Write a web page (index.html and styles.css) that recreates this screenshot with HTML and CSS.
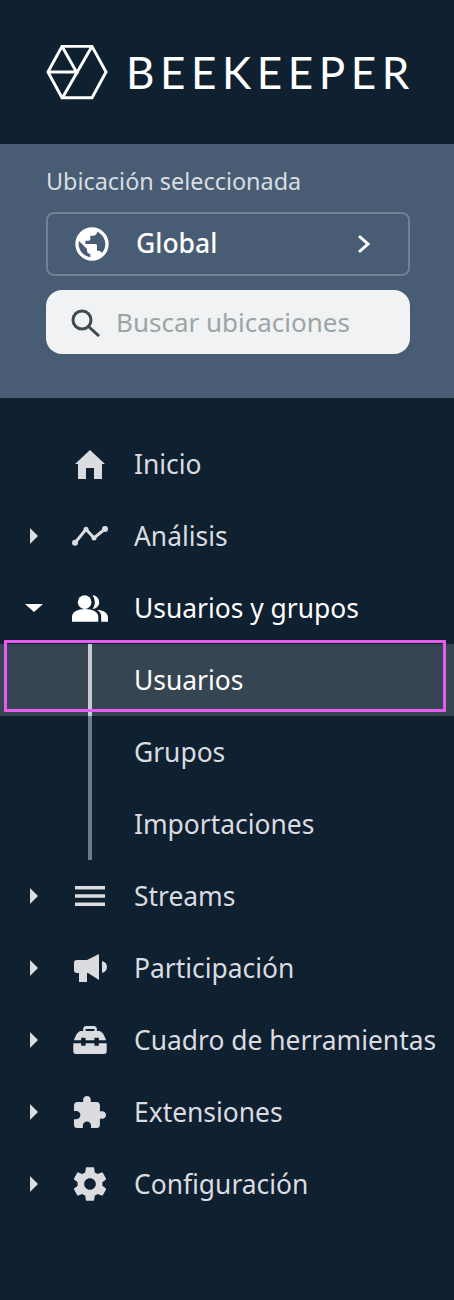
FILE: index.html
```html
<!DOCTYPE html>
<html lang="en">
<head>
    <meta charset="UTF-8">
    <meta name="viewport" content="width=device-width, initial-scale=1.0">
    <title>Beekeeper</title>
    <link rel="stylesheet" href="styles.css">
</head>
<body>
    <div class="sidebar">

        <!-- Logo -->
        <div class="logo">
            <svg class="logo-mark" viewBox="0 0 64 56" width="62" height="56" fill="none" stroke="#fff" stroke-width="3">
                <path d="M16.500 1.500H47.500L62 28L47.500 54.500H16.500L2 28Z"/>
                <path d="M16.500 1.500L31.500 28H2"/>
                <path d="M47.500 1.500L17 54.500"/>
            </svg>
            <span class="logo-text">BEEKEEPER</span>
        </div>

        <!-- Location -->
        <div class="location">
            <div class="location-label">Ubicación seleccionada</div>
            <div class="location-select">
                <svg class="globe" viewBox="0 0 24 24" width="40" height="40">
                    <path fill="#fff" d="M12 2a10 10 0 1 0 0 20 10 10 0 0 0 0-20zM4 12c0-.6.1-1.200.2-1.800L9 15v1c0 1.100.9 2 2 2v1.900C7.100 19.400 4 16 4 12zm13.900 5.400c-.3-.8-1-1.400-1.900-1.400h-1v-3c0-.6-.4-1-1-1H8v-2h2c.6 0 1-.4 1-1V7h2c1.100 0 2-.9 2-2v-.4c2.900 1.200 5 4 5 7.400 0 2.100-.8 4-2.100 5.400z"/>
                </svg>
                <span class="location-name">Global</span>
                <svg class="chevron" viewBox="0 0 14 20" width="14" height="20" fill="none" stroke="#fff" stroke-width="3">
                    <path d="M2 2L11 10L2 18"/>
                </svg>
            </div>
            <div class="location-search">
                <svg viewBox="0 0 30 30" width="30" height="30" fill="none" stroke="#3b4b4f" stroke-width="3">
                    <circle cx="11" cy="13" r="9"/>
                    <path d="M17.500 19.500L28 29"/>
                </svg>
                <span class="search-placeholder">Buscar ubicaciones</span>
            </div>
        </div>

        <!-- Menu -->
        <nav class="menu">
            <div class="row">
                <span class="caret-slot"></span>
                <span class="icon">
                    <svg viewBox="0 0 30 29" width="30" height="29"><path d="M15 0L30 14H27V29H19V18H11V29H3V14H0Z"/></svg>
                </span>
                <span class="label">Inicio</span>
            </div>
            <div class="row">
                <span class="caret-slot"><span class="caret closed"></span></span>
                <span class="icon">
                    <svg viewBox="0 0 36 20" width="36" height="20"><path d="M3 16.700L14 3.300L22 12L33 3" fill="none" stroke="#dadce0" stroke-width="3"/><circle cx="3" cy="16.700" r="3"/><circle cx="14" cy="3.300" r="2.500"/><circle cx="22" cy="12" r="2.500"/><circle cx="33" cy="3" r="3"/></svg>
                </span>
                <span class="label">Análisis</span>
            </div>
            <div class="row open">
                <span class="caret-slot"><span class="caret opened"></span></span>
                <span class="icon white">
                    <svg viewBox="0 0 37 27" width="37" height="27"><circle cx="13" cy="7" r="7"/><path d="M0 27V22C0 17 6 14 13.500 14S27 17 27 22V27Z"/><path d="M21 0A7 7 0 0 1 21 14A11 11 0 0 0 21 0Z"/><path d="M28 15C33 16 37 18 37 23V27H30V22C30 19 29 17 26 15Z"/></svg>
                </span>
                <span class="label">Usuarios y grupos</span>
            </div>

            <div class="submenu">
                <div class="row sub active"><span class="label">Usuarios</span></div>
                <div class="row sub"><span class="label">Grupos</span></div>
                <div class="row sub"><span class="label">Importaciones</span></div>
            </div>

            <div class="row">
                <span class="caret-slot"><span class="caret closed"></span></span>
                <span class="icon">
                    <svg viewBox="0 0 30 20" width="30" height="20"><path d="M0 0H30V3.500H0ZM0 8.200H30V11.700H0ZM0 16.500H30V20H0Z"/></svg>
                </span>
                <span class="label">Streams</span>
            </div>
            <div class="row">
                <span class="caret-slot"><span class="caret closed"></span></span>
                <span class="icon">
                    <svg viewBox="0 0 33 28" width="33" height="28"><path d="M3 6H13L25 0V26L14 19H13V28H5V19H3C1 19 0 18 0 16.500V8.500C0 7 1 6 3 6Z"/><path d="M28 7C31.500 8 33 10 33 13S31.500 18 28 19Z"/></svg>
                </span>
                <span class="label">Participación</span>
            </div>
            <div class="row">
                <span class="caret-slot"><span class="caret closed"></span></span>
                <span class="icon">
                    <svg viewBox="0 0 34 28.500" width="34" height="28"><path d="M10 5V3C10 1 11.500 0 13 0H21C22.500 0 24 1 24 3V5H26C28 5 30 7 31 9L33.500 14.500H26V12H21.500V14.500H12.500V12H8V14.500H.5L3 9C4 7 6 5 8 5ZM12.500 5H21.500V3H12.500Z"/><path d="M0 17.500H8V20H12.500V17.500H21.500V20H26V17.500H34V26C34 27.500 33 28.500 31.500 28.500H2.500C1 28.500 0 27.500 0 26Z"/></svg>
                </span>
                <span class="label">Cuadro de herramientas</span>
            </div>
            <div class="row">
                <span class="caret-slot"><span class="caret closed"></span></span>
                <span class="icon">
                    <svg viewBox="2 1 21 21" width="32" height="32"><path d="M20.500 11H19V7c0-1.100-.9-2-2-2h-4V3.500C13 2.120 11.880 1 10.500 1S8 2.120 8 3.500V5H4c-1.100 0-1.990.9-1.990 2v3.800H3.500c1.490 0 2.700 1.210 2.700 2.700s-1.210 2.700-2.700 2.700H2V20c0 1.100.9 2 2 2h3.800v-1.500c0-1.490 1.210-2.700 2.700-2.700 1.490 0 2.700 1.210 2.700 2.700V22H17c1.100 0 2-.9 2-2v-4h1.500c1.380 0 2.500-1.120 2.500-2.500S21.880 11 20.500 11z"/></svg>
                </span>
                <span class="label">Extensiones</span>
            </div>
            <div class="row">
                <span class="caret-slot"><span class="caret closed"></span></span>
                <span class="icon">
                    <svg viewBox="2.400 2 19.200 20" width="32" height="34"><path fill-rule="evenodd" d="M19.430 12.980c.04-.32.07-.64.07-.98s-.03-.66-.07-.98l2.110-1.650c.19-.15.24-.42.120-.64l-2-3.460c-.12-.22-.39-.3-.61-.22l-2.490 1c-.52-.4-1.080-.73-1.690-.98l-.38-2.650A.488.488 0 0 0 14 2h-4c-.25 0-.46.18-.49.42l-.38 2.650c-.61.25-1.170.59-1.690.98l-2.490-1c-.23-.09-.49 0-.61.22l-2 3.460c-.13.22-.07.49.12.64l2.110 1.650c-.04.32-.07.65-.07.98s.03.66.07.98l-2.110 1.650c-.19.15-.24.42-.12.64l2 3.460c.12.22.39.3.61.22l2.490-1c.52.4 1.080.73 1.690.98l.38 2.650c.03.24.24.42.49.42h4c.25 0 .46-.18.49-.42l.38-2.650c.61-.25 1.170-.59 1.690-.98l2.490 1c.23.09.49 0 .61-.22l2-3.460c.12-.22.07-.49-.12-.64l-2.110-1.650zM12 15.500c-1.930 0-3.500-1.570-3.500-3.500s1.570-3.500 3.500-3.500 3.500 1.570 3.500 3.500-1.570 3.500-3.500 3.500z"/></svg>
                </span>
                <span class="label">Configuración</span>
            </div>
        </nav>

        <!-- Annotation box -->
        <div class="highlight-box"></div>
    </div>
</body>
</html>
```

FILE: styles.css
```css
body {
    margin: 0;
    padding: 0;
    background: #0f2030;
    font-family: 'Noto Sans', sans-serif;
}

.sidebar {
    position: relative;
    width: 454px;
    height: 1300px;
    overflow: hidden;
    background: #0f2030;
}

.logo {
    display: flex;
    align-items: center;
    height: 144px;
    padding-left: 46px;
    box-sizing: border-box;
}

.logo-mark {
    flex: none;
}

.logo-text {
    margin-left: 18px;
    color: #fff;
    font-family: 'Lato', sans-serif;
    font-size: 44px;
    font-weight: 400;
    letter-spacing: 5.600px;
    line-height: 1;
}

.location {
    height: 254px;
    box-sizing: border-box;
    padding: 21px 44px 0 46px;
    background: #485d73;
}

.location-label {
    color: #d9dde2;
    font-size: 23.400px;
    line-height: 32px;
}

.location-select {
    display: flex;
    align-items: center;
    height: 64px;
    margin-top: 15px;
    padding: 0 37px 0 24px;
    box-sizing: border-box;
    border: 2px solid #6f8296;
    border-radius: 8px;
}

.location-name {
    flex: 1;
    margin-left: 24px;
    padding-bottom: 2px;
    color: #fff;
    font-size: 26.500px;
    font-weight: 500;
}

.location-search {
    display: flex;
    align-items: center;
    height: 64px;
    margin-top: 14px;
    padding-left: 25px;
    border-radius: 16px;
    background: #f0f2f4;
}

.search-placeholder {
    margin-left: 15px;
    padding-bottom: 1px;
    color: #9ba6a4;
    font-size: 26px;
}

.menu {
    margin-top: 30px;
}

.row {
    display: flex;
    align-items: center;
    height: 72px;
    color: #dadce0;
}

.caret-slot {
    flex: none;
    display: flex;
    justify-content: center;
    width: 68px;
    margin-right: 4px;
}

.caret {
    width: 0;
    height: 0;
    border: 0 solid transparent;
}

.caret.closed {
    border-width: 8px 0 8px 8px;
    border-left-color: #dadce0;
}

.caret.opened {
    border-width: 8px 9px 0 9px;
    border-top-color: #fff;
}

.icon {
    flex: none;
    display: flex;
    justify-content: center;
    width: 36px;
    margin-right: 26px;
    fill: #dadce0;
}

.icon.white {
    fill: #fff;
}

.label {
    padding-bottom: 1px;
    font-size: 26.400px;
}

.row.open {
    color: #fff;
}

.submenu {
    background: linear-gradient(#6f7a86, #6f7a86) 88px 0 / 4px 100% no-repeat;
}

.row.sub {
    padding-left: 134px;
}

.row.sub.active {
    color: #fff;
    background: linear-gradient(#c8ccd0, #c8ccd0) 88px 0 / 4px 100% no-repeat, #364552;
}

.highlight-box {
    position: absolute;
    left: 4px;
    top: 640px;
    width: 436px;
    height: 66px;
    border: 3px solid #e75cf0;
}
```
